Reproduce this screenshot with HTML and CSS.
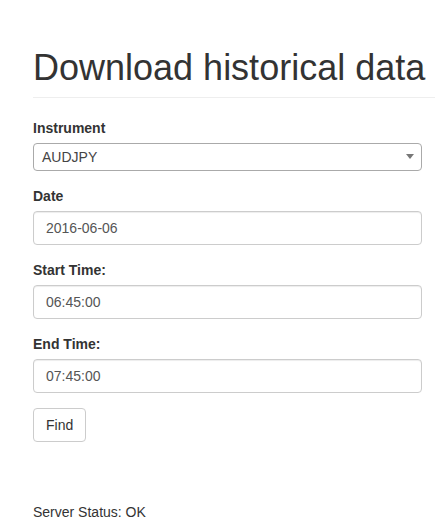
FILE: index.html
```html
<!DOCTYPE html>
<html>
<head>
<meta charset="utf-8">
<link rel="stylesheet" href="styles.css">
</head>
<body>
<div class="container">
  <div class="page-header">
    <h1>Download historical data</h1>
  </div>
  <form class="form">
    <div class="form-group">
      <label>Instrument</label>
      <div class="select">
        <span>AUDJPY</span>
        <svg class="caret" width="8" height="5" viewBox="0 0 8 5"><path d="M0 0H8L4 5Z" fill="#777"/></svg>
      </div>
    </div>
    <div class="form-group">
      <label>Date</label>
      <div class="input">2016-06-06</div>
    </div>
    <div class="form-group">
      <label>Start Time:</label>
      <div class="input">06:45:00</div>
    </div>
    <div class="form-group">
      <label>End Time:</label>
      <div class="input">07:45:00</div>
    </div>
    <div class="btn">Find</div>
  </form>
  <p class="status">Server Status: OK</p>
</div>
</body>
</html>
```
FILE: styles.css
```css
* { box-sizing: border-box; }
html, body { margin: 0; padding: 0; background: #fff; }
body {
  font-family: "Liberation Sans", Arial, sans-serif;
  font-size: 14px;
  line-height: 20px;
  color: #333;
}
.container {
  padding: 48px 0 0 33px;
  overflow: hidden;
}
.page-header {
  padding-bottom: 9px;
  margin: 0 -40px 20px 0;
  border-bottom: 1px solid #eee;
}
h1 {
  margin: 0;
  font-size: 36px;
  font-weight: 500;
  line-height: 1.1;
  white-space: nowrap;
}
.form { width: 389px; }
.form-group { margin-bottom: 15px; }
label {
  display: block;
  font-weight: bold;
  margin-bottom: 5px;
}
.select {
  height: 28px;
  border: 1px solid #aaa;
  border-radius: 4px;
  padding: 0 0 0 8px;
  display: flex;
  align-items: center;
  justify-content: space-between;
  color: #444;
}
.caret { margin-right: 7px; }
.input {
  height: 34px;
  border: 1px solid #ccc;
  border-radius: 4px;
  padding: 6px 12px;
  color: #555;
  box-shadow: inset 0 1px 1px rgba(0,0,0,.075);
}
.btn {
  display: inline-block;
  height: 34px;
  padding: 6px 12px;
  border: 1px solid #ccc;
  border-radius: 4px;
  color: #333;
  background: #fff;
}
.status {
  margin: 60px 0 0;
}
```
